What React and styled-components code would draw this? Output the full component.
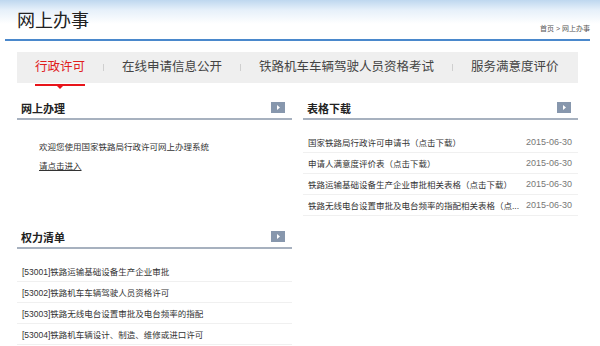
import React from "react";
import styled, { createGlobalStyle } from "styled-components";

const GlobalStyle = createGlobalStyle`
  html, body {
    margin: 0;
    padding: 0;
    background: #fff;
  }
  body {
    font-family: "Liberation Sans", "Noto Sans CJK SC", sans-serif;
    color: #333;
  }
`;

const tabs = ["行政许可", "在线申请信息公开", "铁路机车车辆驾驶人员资格考试", "服务满意度评价"];

const forms = [
  "国家铁路局行政许可申请书（点击下载）",
  "申请人满意度评价表（点击下载）",
  "铁路运输基础设备生产企业审批相关表格（点击下载）",
  "铁路无线电台设置审批及电台频率的指配相关表格（点...",
];

const powers = [
  "[53001]铁路运输基础设备生产企业审批",
  "[53002]铁路机车车辆驾驶人员资格许可",
  "[53003]铁路无线电台设置审批及电台频率的指配",
  "[53004]铁路机车辆设计、制造、维修或进口许可",
];

const Arrow = () => (
  <MoreButton>
    <svg width="14" height="11" viewBox="0 0 14 11">
      <path d="M6 3 L9 5.5 L6 8 Z" fill="#fff" />
    </svg>
  </MoreButton>
);

const App = () => {
  return (
    <Page>
      <GlobalStyle />
      <TopBar>
        <TopInner>
          <Title>网上办事</Title>
          <Crumb>首页 &gt; 网上办事</Crumb>
        </TopInner>
      </TopBar>

      <TabBar>
        {tabs.map((t, i) => (
          <React.Fragment key={t}>
            {i > 0 && <Divider />}
            <Tab active={i === 0}>{t}</Tab>
          </React.Fragment>
        ))}
      </TabBar>

      <Columns>
        <Column>
          <Section>
            <SectionHead>
              <HeadTitle>网上办理</HeadTitle>
              <Arrow />
            </SectionHead>
            <Welcome>
              <p>欢迎您使用国家铁路局行政许可网上办理系统</p>
              <EnterLink href="#">请点击进入</EnterLink>
            </Welcome>
          </Section>
          <Section>
            <SectionHead>
              <HeadTitle>权力清单</HeadTitle>
              <Arrow />
            </SectionHead>
            <List>
              {powers.map((p) => (
                <Row key={p}>
                  <RowText>{p}</RowText>
                </Row>
              ))}
            </List>
          </Section>
        </Column>

        <Column>
          <Section>
            <SectionHead>
              <HeadTitle>表格下载</HeadTitle>
              <Arrow />
            </SectionHead>
            <List>
              {forms.map((f) => (
                <Row key={f}>
                  <RowText>{f}</RowText>
                  <RowDate>2015-06-30</RowDate>
                </Row>
              ))}
            </List>
          </Section>
        </Column>
      </Columns>
    </Page>
  );
};

const Page = styled.div`
  width: 600px;
  height: 346px;
  overflow: hidden;
  background: linear-gradient(#bed7ef 0, #e6f0fa 10px, #fff 24px) no-repeat;
`;

const TopBar = styled.div`
  padding: 0 10px 0 5px;
`;

const TopInner = styled.div`
  height: 39px;
  border-bottom: 2px solid #4a88cc;
  display: flex;
  align-items: flex-end;
  justify-content: space-between;
  padding-left: 12px;
`;

const Title = styled.h1`
  margin: 0 0 7px;
  font-size: 18px;
  font-weight: normal;
  line-height: 22px;
  color: #222;
`;

const Crumb = styled.span`
  font-size: 7px;
  line-height: 10px;
  margin-bottom: 5px;
  color: #555;
`;

const TabBar = styled.div`
  margin: 11px 22px 0 17px;
  height: 31px;
  background: #efefef;
  display: flex;
  align-items: center;
`;

const Tab = styled.div`
  position: relative;
  padding: 0 18px;
  font-size: 12.5px;
  line-height: 31px;
  color: ${(p) => (p.active ? "#e0201c" : "#444")};
  white-space: nowrap;
  ${(p) =>
    p.active &&
    `
    &::after {
      content: "";
      position: absolute;
      left: 18px;
      right: 18px;
      bottom: -3px;
      height: 2px;
      background: #e8141a;
    }
    &::before {
      content: "";
      position: absolute;
      left: 50%;
      margin-left: -3px;
      bottom: -6px;
      border-left: 3px solid transparent;
      border-right: 3px solid transparent;
      border-top: 3px solid #e8141a;
    }
  `}
`;

const Divider = styled.span`
  width: 1px;
  height: 7px;
  background: #cfcfcf;
`;

const Columns = styled.div`
  margin: 14px 22px 0 17px;
  display: grid;
  grid-template-columns: 275px 275px;
  gap: 11px;
`;

const Column = styled.div`
  display: flex;
  flex-direction: column;
`;

const Section = styled.div``;

const SectionHead = styled.div`
  height: 21px;
  border-bottom: 2px solid #a7b1bf;
  display: flex;
  align-items: center;
  justify-content: space-between;
  padding: 0 7px 0 4px;
`;

const HeadTitle = styled.h3`
  margin: 0;
  font-size: 11px;
  font-weight: bold;
  color: #222;
`;

const MoreButton = styled.span`
  display: block;
  width: 14px;
  height: 11px;
  background: #8797ad;
  svg {
    display: block;
  }
`;

const Welcome = styled.div`
  height: 106px;
  box-sizing: border-box;
  padding: 18px 0 0 22px;
  font-size: 8.5px;
  line-height: 19px;
  p {
    margin: 0;
  }
`;

const EnterLink = styled.a`
  color: #333;
  text-decoration: underline;
`;

const List = styled.div`
  padding-top: 12px;
`;

const Row = styled.div`
  height: 20px;
  border-bottom: 1px solid #f0f0f0;
  display: flex;
  align-items: center;
  justify-content: space-between;
  padding: 0 6px 0 5px;
`;

const RowText = styled.span`
  font-size: 8.5px;
  color: #333;
  white-space: nowrap;
`;

const RowDate = styled.span`
  font-size: 9px;
  color: #777;
`;

export default App;
